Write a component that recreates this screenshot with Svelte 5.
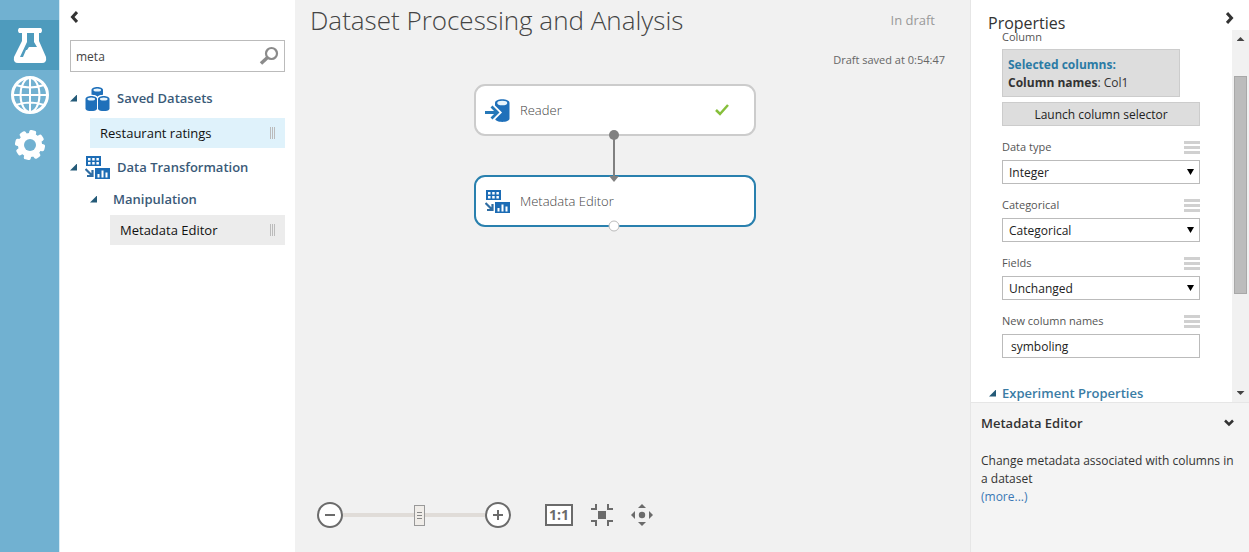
<script>
	let search = 'meta'
	let zoom = 54
	let newNames = 'symboling'

	const navItems = ['Experiments', 'Web services', 'Settings']

	let fields = [
		{ id: 'data-type', label: 'Data type', value: 'Integer', options: ['Unchanged', 'String', 'Integer', 'Double', 'Boolean'] },
		{ id: 'categorical', label: 'Categorical', value: 'Categorical', options: ['Unchanged', 'Categorical', 'Non-categorical'] },
		{ id: 'fields', label: 'Fields', value: 'Unchanged', options: ['Unchanged', 'Features', 'Label', 'Weight'] }
	]
</script>

{#snippet transformIcon()}
	<svg class="icon" width="25" height="25" viewBox="0 0 25 25">
		<path fill="#1c6cb5" d="M1 1h15v10H1z" />
		<path fill="#fff" d="M3 3h2.500v2.500H3zM7.200 3h2.500v2.500H7.200zM11.400 3h2.500v2.500h-2.500zM3 7h2.500v2.500H3zM7.200 7h2.500v2.500H7.200zM11.400 7h2.500v2.500h-2.500z" />
		<path fill="#1c6cb5" d="M10 13h15v11H10z" />
		<path fill="#fff" d="M12.500 19h2v3.500h-2zM16.500 15.500h2v7h-2zM20.500 17.500h2v5h-2z" />
		<path fill="none" stroke="#2f6da3" stroke-width="2.200" d="M.5 14l6.500 6.500M7.500 15v6H2" />
	</svg>
{/snippet}

{#snippet barrel(x, y)}
	<g transform="translate({x} {y})">
		<path fill="#1f70ba" d="M0 3C0-1 11.500-1 11.500 3V12.500C11.500 16 0 16 0 12.500z" />
		<ellipse cx="5.750" cy="3" rx="3.800" ry="1.500" fill="#e9f5fc" />
	</g>
{/snippet}

<div class="app">
	<nav>
		{#each navItems as item, i}
			<button class:active={i === 0} aria-label={item}>
				{#if i === 0}
					<svg width="34" height="38" viewBox="0 0 34 38">
						<path fill="#fff" d="M6 2h22q2 2.500 0 5h-2v8l7 16q1 6-4 6H5q-5 0-4-6L9 15V7H6q-2-2.500 0-5z" />
						<path fill="#4e9bbd" d="M14 7h7v9l3 5h-8l-2 3h-1l-3 7H7l7-15z" />
					</svg>
				{:else if i === 1}
					<svg width="40" height="40" viewBox="0 0 40 40" fill="none" stroke="#fff" stroke-width="2">
						<circle cx="20" cy="20" r="17.500" stroke-width="3" />
						<ellipse cx="20" cy="20" rx="9.500" ry="17" />
						<path d="M20 3v34M3 20h34M6 10q14 5 28 0M6 30q14-5 28 0" />
					</svg>
				{:else}
					<svg width="30" height="30" viewBox="-15 -15 30 30">
						<g fill="#fff">
							{#each [0, 45, 90, 135] as turn}
								<rect x="-3.500" y="-15" width="7" height="30" rx="2" transform="rotate({turn + 12})" />
							{/each}
							<circle r="12" />
						</g>
						<circle r="6" fill="#71b1d1" />
					</svg>
				{/if}
			</button>
		{/each}
	</nav>

	<aside class="modules">
		<button class="collapse" aria-label="Collapse modules">
			<svg width="8" height="12" viewBox="0 0 8 12"><path fill="none" stroke="#333" stroke-width="3" d="M7 1L2.500 6L7 11" /></svg>
		</button>
		<div class="search">
			<input type="text" aria-label="Search modules" bind:value={search}>
			<button aria-label="Search">
				<svg width="20" height="20" viewBox="0 0 20 20" fill="none" stroke="#8b8b8b">
					<circle cx="12.500" cy="7.500" r="5.500" stroke-width="2.200" />
					<path stroke-width="3.500" d="M8.500 11.500L2 17.500" />
				</svg>
			</button>
		</div>

		<div class="group">
			<span class="arrow"></span>
			<svg class="icon" width="25" height="25" viewBox="0 0 25 25">
				{@render barrel(6.5, 1)}
				<path fill="#fff" d="M0 11C0 8 12 8 12.500 11C13 8 25 8 25 11V25H0z" />
				{@render barrel(0.5, 10)}
				{@render barrel(13, 10)}
			</svg>
			<h2>Saved Datasets</h2>
		</div>
		<div class="item selected">Restaurant ratings <span class="grip"></span></div>
		<div class="group">
			<span class="arrow"></span>
			{@render transformIcon()}
			<h2>Data Transformation</h2>
		</div>
		<div class="group sub">
			<span class="arrow"></span>
			<h2>Manipulation</h2>
		</div>
		<div class="item nested">Metadata Editor <span class="grip"></span></div>
	</aside>

	<main>
		<header>
			<h1>Dataset Processing and Analysis</h1>
			<div class="status">
				<span class="draft">In draft</span>
				<span class="saved">Draft saved at 0:54:47</span>
			</div>
		</header>

		<div class="surface">
			<div class="node reader">
				<svg class="icon" width="25" height="25" viewBox="0 0 25 25">
					<path fill="#1f70ba" d="M10 5C10 0 24.500 0 24.500 5V20.500C24.500 25 10 25 10 20.500z" />
					<ellipse cx="17.250" cy="5" rx="5" ry="2.300" fill="#e9f5fc" />
					<path fill="none" stroke="#fff" stroke-width="5" d="M8 9l5.500 5.500L8 20" />
					<path fill="none" stroke="#2678b8" stroke-width="2.800" d="M0 14.500h12M6.500 8.500l6 6-6 6" />
				</svg>
				<span>Reader</span>
				<svg class="check" width="14" height="12" viewBox="0 0 14 12"><path fill="none" stroke="#86bf3b" stroke-width="2.500" d="M1 6l4 4L13 1" /></svg>
			</div>
			<div class="node editor">
				{@render transformIcon()}
				<span>Metadata Editor</span>
			</div>
			<svg class="link" width="12" height="104" viewBox="0 0 12 104">
				<path stroke="#808080" stroke-width="2" d="M6 6v44" />
				<circle cx="6" cy="6" r="5" fill="#808080" />
				<path fill="#808080" d="M1 47h10L6 53z" />
				<circle cx="6" cy="97" r="5" fill="#fff" stroke="#bbb" />
			</svg>
		</div>

		<div class="toolbar">
			<button aria-label="Zoom out">
				<svg width="26" height="26" viewBox="0 0 26 26" fill="#fff" stroke="#6b6b6b" stroke-width="2"><circle cx="13" cy="13" r="12" /><path d="M8 13h10" /></svg>
			</button>
			<input type="range" min="0" max="100" aria-label="Zoom" bind:value={zoom}>
			<button aria-label="Zoom in">
				<svg width="26" height="26" viewBox="0 0 26 26" fill="#fff" stroke="#6b6b6b" stroke-width="2"><circle cx="13" cy="13" r="12" /><path d="M8 13h10M13 8v10" /></svg>
			</button>
			<button class="actual">1:1</button>
			<button class="tool" aria-label="Zoom to fit">
				<svg width="22" height="22" viewBox="0 0 22 22">
					<path fill="#6b6b6b" d="M7 7h8v8H7z" />
					<path fill="none" stroke="#6b6b6b" stroke-width="2" d="M5 0v5H0M17 0v5h5M5 22v-5H0M17 22v-5h5" />
				</svg>
			</button>
			<button class="tool" aria-label="Pan">
				<svg width="22" height="22" viewBox="0 0 22 22" fill="#6b6b6b">
					<circle cx="11" cy="11" r="3.200" />
					<path d="M7 4l4-4 4 4zM7 18l4 4 4-4zM4 7l-4 4 4 4zM18 7l4 4-4 4z" />
				</svg>
			</button>
		</div>
	</main>

	<aside class="properties">
		<div class="top">
			<h2>Properties</h2>
			<button aria-label="Collapse properties">
				<svg width="8" height="12" viewBox="0 0 8 12"><path fill="none" stroke="#333" stroke-width="3" d="M1 1l4.500 5L1 11" /></svg>
			</button>
		</div>
		<div class="scroller">
			<div class="form">
				<div class="caption">Column</div>
				<div class="columns">
					<div class="picked">Selected columns:</div>
					<div><b>Column names</b>: Col1</div>
				</div>
				<button class="launch">Launch column selector</button>
				{#each fields as field}
					<div class="field">
						<label for={field.id}>{field.label}</label>
						<span class="menu"></span>
					</div>
					<div class="select">
						<select id={field.id} bind:value={field.value}>
							{#each field.options as option}
								<option>{option}</option>
							{/each}
						</select>
					</div>
				{/each}
				<div class="field">
					<label for="new-names">New column names</label>
					<span class="menu"></span>
				</div>
				<input id="new-names" type="text" bind:value={newNames}>
				<div class="section">
					<span class="arrow"></span>
					<h3>Experiment Properties</h3>
				</div>
			</div>
			<div class="bar">
				<span class="up"></span>
				<span class="thumb"></span>
				<span class="down"></span>
			</div>
		</div>
		<div class="help">
			<div class="help-title">
				<h3>Metadata Editor</h3>
				<svg width="10" height="8" viewBox="0 0 10 8"><path fill="none" stroke="#333" stroke-width="2.500" d="M1 1.500l4 4 4-4" /></svg>
			</div>
			<p>Change metadata associated with columns in a dataset</p>
			<a href="#more">(more...)</a>
		</div>
	</aside>
</div>

<style>
	:global(body) {
		margin: 0;
	}

	.app {
		display: grid;
		grid-template-columns: 60px 235px 1fr 279px;
		min-height: 100vh;
		font-family: "Open Sans", "Noto Sans", sans-serif;
		font-size: 12px;
		color: #333;
		background: #f1f1f1;
	}

	.app * {
		box-sizing: border-box;
	}

	h1, h2, h3, p {
		margin: 0;
	}

	button {
		display: flex;
		align-items: center;
		justify-content: center;
		padding: 0;
		border: 0;
		background: none;
		color: inherit;
		font-family: inherit;
		font-size: inherit;
	}

	svg {
		display: block;
		flex: none;
	}

	nav {
		padding-top: 20px;
		background: #71b1d1;
		border-right: 1px solid #d6ebf5;
	}

	nav button {
		width: 100%;
		height: 50px;
	}

	nav .active {
		background: #4e9bbd;
	}

	.modules {
		padding: 0 10px;
		background: #fff;
	}

	.collapse {
		height: 34px;
	}

	.search {
		display: flex;
		height: 32px;
		margin: 6px 0 8px;
		border: 1px solid #bbb;
	}

	.search input {
		flex: 1;
		min-width: 0;
		padding: 0 5px;
		border: 0;
		font: inherit;
		color: #444;
	}

	.search button {
		width: 30px;
	}

	.group {
		display: flex;
		align-items: center;
		height: 36px;
	}

	.group h2 {
		margin-left: 7px;
		font-size: 13px;
		font-weight: 600;
		color: #3a5a78;
	}

	.group .icon {
		margin-left: 8px;
	}

	.sub {
		height: 28px;
		padding-left: 20px;
	}

	.sub h2 {
		margin-left: 16px;
	}

	.arrow {
		width: 7px;
		height: 7px;
		background: #245a78;
		clip-path: polygon(100% 0, 100% 100%, 0 100%);
	}

	.item {
		display: flex;
		align-items: center;
		justify-content: space-between;
		height: 30px;
		margin: 2px 0 1px 20px;
		padding: 0 10px;
		font-size: 13px;
		color: #111;
		background: #ececec;
	}

	.selected {
		background: #dff2fb;
	}

	.nested {
		margin-left: 40px;
	}

	.grip {
		width: 5px;
		height: 12px;
		background: repeating-linear-gradient(90deg, #bbb 0 1px, transparent 1px 2px);
	}

	main {
		display: flex;
		flex-direction: column;
		min-width: 0;
	}

	header {
		display: flex;
		justify-content: space-between;
		height: 80px;
		padding: 0 25px 0 15px;
	}

	h1 {
		font-size: 26px;
		font-weight: 300;
		line-height: 40px;
		color: #444;
	}

	.status {
		display: flex;
		flex-direction: column;
		align-items: flex-end;
		line-height: 40px;
	}

	.draft {
		padding-right: 10px;
		font-size: 13px;
		color: #999;
	}

	.saved {
		font-size: 11px;
		color: #666;
	}

	.surface {
		position: relative;
		flex: 1;
		min-height: 160px;
	}

	.node {
		position: absolute;
		left: 179px;
		display: flex;
		align-items: center;
		gap: 10px;
		width: 282px;
		height: 52px;
		padding: 0 9px;
		border: 2px solid #ccc;
		border-radius: 11px;
		background: #fff;
		font-size: 13px;
		font-weight: 300;
		color: #444;
	}

	.reader {
		top: 4px;
	}

	.editor {
		top: 95px;
		border-color: #2980ae;
	}

	.check {
		margin: 0 16px 0 auto;
	}

	.link {
		position: absolute;
		left: 313px;
		top: 49px;
	}

	.toolbar {
		display: flex;
		align-items: center;
		height: 26px;
		margin: 0 22px 24px;
	}

	.toolbar input {
		width: 142px;
		height: 22px;
		margin: 0;
		appearance: none;
		background: linear-gradient(#e0dcd8, #e0dcd8) center / 100% 4px no-repeat;
	}

	.toolbar input::-webkit-slider-thumb {
		appearance: none;
		width: 11px;
		height: 21px;
		border: 1px solid #999;
		background: repeating-linear-gradient(#888 0 1px, transparent 1px 3px) center / 5px 7px no-repeat, #f0ede9;
	}

	.actual {
		width: 28px;
		height: 22px;
		margin-left: 34px;
		border: 2px solid #6b6b6b;
		background: #fff;
		color: #6b6b6b;
		font-size: 14px;
		font-weight: 700;
		line-height: 18px;
	}

	.tool {
		margin-left: 18px;
	}

	.properties {
		display: flex;
		flex-direction: column;
		border-left: 1px solid #e6e6e6;
		background: #fff;
	}

	.top {
		display: flex;
		justify-content: space-between;
		align-items: flex-start;
		height: 30px;
		padding: 12px 15px 0 17px;
	}

	.top h2 {
		font-size: 16px;
		font-weight: 400;
		line-height: 22px;
	}

	.scroller {
		display: flex;
		justify-content: space-between;
		height: 372px;
		overflow: hidden;
	}

	.form {
		width: 229px;
		padding-left: 31px;
	}

	.caption {
		height: 19px;
		line-height: 14px;
		color: #555;
		font-size: 11px;
	}

	.columns {
		width: 178px;
		height: 48px;
		padding: 6px 5px;
		border: 1px solid #ccc;
		background: #ddd;
		line-height: 18px;
	}

	.picked {
		font-weight: 700;
		color: #2b7ba5;
	}

	.launch {
		width: 198px;
		height: 24px;
		margin: 5px 0 10px;
		border: 1px solid #ccc;
		background: #ddd;
		color: #222;
	}

	.field {
		display: flex;
		justify-content: space-between;
		width: 198px;
		height: 24px;
		font-size: 11px;
		line-height: 22px;
		color: #555;
	}

	.menu {
		width: 16px;
		height: 13px;
		margin-top: 5px;
		background: repeating-linear-gradient(#d0d0d0 0 3px, transparent 3px 5px);
	}

	.select {
		position: relative;
		width: 198px;
		margin-bottom: 10px;
	}

	.select::after {
		content: "";
		position: absolute;
		top: 9px;
		right: 6px;
		width: 7px;
		height: 6px;
		background: #000;
		clip-path: polygon(0 0, 100% 0, 50% 100%);
		pointer-events: none;
	}

	select, .form input {
		display: block;
		width: 198px;
		height: 24px;
		padding: 0 6px;
		border: 1px solid #bbb;
		border-radius: 0;
		appearance: none;
		background: #fff;
		color: #222;
		font-family: inherit;
		font-size: 12px;
	}

	.form input {
		padding: 0 8px;
	}

	.section {
		display: flex;
		align-items: center;
		gap: 6px;
		height: 22px;
		margin: 24px 0 0 -13px;
	}

	.section h3 {
		font-size: 13px;
		font-weight: 600;
		color: #3a7ca5;
	}

	.bar {
		display: flex;
		flex-direction: column;
		align-items: center;
		width: 17px;
		padding: 7px 0;
		background: #f1f1f1;
	}

	.up, .down {
		width: 8px;
		height: 4px;
		background: #444;
		clip-path: polygon(50% 0, 100% 100%, 0 100%);
	}

	.down {
		margin-top: auto;
		clip-path: polygon(0 0, 100% 0, 50% 100%);
	}

	.thumb {
		width: 13px;
		height: 218px;
		margin-top: 35px;
		border: 1px solid #a8a8a8;
		background: #bcbcbc;
	}

	.help {
		flex: 1;
		padding: 10px 8px 10px 10px;
		border-top: 1px solid #e6e6e6;
		background: #f4f4f4;
		line-height: 18px;
	}

	.help-title {
		display: flex;
		align-items: center;
		justify-content: space-between;
		height: 20px;
		margin-bottom: 19px;
		padding-right: 7px;
	}

	.help-title h3 {
		font-size: 13px;
		font-weight: 600;
	}

	.help a {
		color: #3a78b5;
		text-decoration: none;
	}
</style>
